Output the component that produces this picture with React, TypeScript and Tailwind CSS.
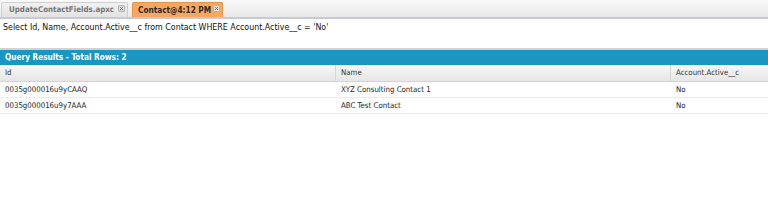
import React from 'react';

const rows = [
  { id: '0035g000016u9yCAAQ', name: 'XYZ Consulting Contact 1', active: 'No' },
  { id: '0035g000016u9y7AAA', name: 'ABC Test Contact', active: 'No' },
];

const CloseBox: React.FC = () => (
  <span className="ml-auto mt-[2px] flex h-[7px] w-[7px] shrink-0 items-center justify-center self-start rounded-[1px] border border-[#b5b5b5] bg-[#dcdcdc]">
    <svg width="5" height="5" viewBox="0 0 5 5">
      <path d="M1 1 L4 4 M4 1 L1 4" stroke="#8a8a8a" strokeWidth="1" />
    </svg>
  </span>
);

const App: React.FC = () => {
  return (
    <div
      className="h-[216px] w-full overflow-hidden bg-white leading-none text-[#222]"
      style={{ fontFamily: '"DejaVu Sans Condensed", "Liberation Sans", sans-serif' }}
    >
      {/* tabs */}
      <div className="flex h-[17px] items-end gap-[4px] bg-gradient-to-b from-[#fafafa] to-[#e8e8e8] pl-[1px] text-[8.2px] font-bold">
        <div className="flex h-[15px] w-[127px] shrink-0 items-center whitespace-nowrap rounded-t-[2px] border border-b-0 border-[#cfcfcf] bg-gradient-to-b from-[#f2f2f2] to-[#e2e2e2] pl-[7px] pr-[2px] text-[7.9px] text-[#777]">
          <span>UpdateContactFields.apxc</span>
          <CloseBox />
        </div>
        <div className="flex h-[15px] w-[91px] shrink-0 items-center whitespace-nowrap rounded-t-[2px] border border-b-0 border-[#e8944a] bg-[#f8a75e] pl-[5px] pr-[2px] text-[#2b2b2b]">
          <span>Contact@4:12 PM</span>
          <CloseBox />
        </div>
      </div>
      <div className="h-[2px] bg-[#c8c9d6]" />

      {/* query */}
      <div className="h-[29px] whitespace-nowrap px-[3px] pt-[4px] text-[8.8px] text-[#111]">
        Select Id, Name, Account.Active__c from Contact WHERE Account.Active__c = 'No'
      </div>
      <div className="h-[2px] bg-[#d2d2d2]" />

      {/* results */}
      <div className="flex h-[15px] items-center whitespace-nowrap bg-[#1a96c2] px-[5px] text-[8.2px] font-bold text-white">
        Query Results - Total Rows: 2
      </div>
      <div className="grid h-[17px] grid-cols-[336px_335px_1fr] border-b border-[#d4d4d4] bg-gradient-to-b from-[#f8f8f8] to-[#e6e6e6] text-[7.8px] text-[#333]">
        <div className="flex items-center border-r border-[#d6d6d6] px-[5px]">Id</div>
        <div className="flex items-center border-r border-[#d6d6d6] px-[5px]">Name</div>
        <div className="flex items-center px-[5px]">Account.Active__c</div>
      </div>
      {rows.map((r) => (
        <div key={r.id} className="grid h-[16px] grid-cols-[336px_335px_1fr] border-b border-[#ececec] text-[7.8px] text-[#222]">
          <div className="flex items-center px-[5px]">{r.id}</div>
          <div className="flex items-center px-[5px]">{r.name}</div>
          <div className="flex items-center px-[5px]">{r.active}</div>
        </div>
      ))}
    </div>
  );
};

export default App;
